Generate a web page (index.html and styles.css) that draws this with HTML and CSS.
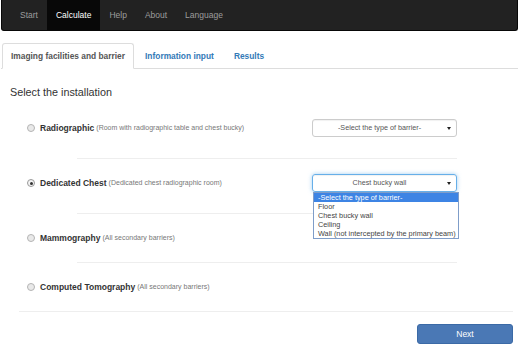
FILE: index.html
```html
<!DOCTYPE html>
<html lang="en">
<head>
    <meta charset="UTF-8">
    <title>Shielding calculation</title>
    <link rel="stylesheet" href="styles.css">
</head>
<body>
    <nav class="navbar">
        <ul class="nav-links">
            <li><a href="#">Start</a></li>
            <li class="active"><a href="#">Calculate</a></li>
            <li><a href="#">Help</a></li>
            <li><a href="#">About</a></li>
            <li><a href="#">Language</a></li>
        </ul>
    </nav>

    <ul class="tabs">
        <li class="active"><a href="#">Imaging facilities and barrier</a></li>
        <li><a href="#">Information input</a></li>
        <li><a href="#">Results</a></li>
    </ul>

    <div class="content">
        <h4 class="title">Select the installation</h4>

        <div class="installation with-select">
            <label class="option">
                <input type="radio" name="room">
                <b>Radiographic</b> <small>(Room with radiographic table and chest bucky)</small>
            </label>
            <div class="barrier">
                <div class="barrier-select">-Select the type of barrier-</div>
            </div>
        </div>
        <hr class="sep">

        <div class="installation with-select">
            <label class="option">
                <input type="radio" name="room" checked>
                <b>Dedicated Chest</b> <small>(Dedicated chest radiographic room)</small>
            </label>
            <div class="barrier">
                <div class="barrier-select focused">Chest bucky wall</div>
                <ul class="barrier-list">
                    <li class="selected">-Select the type of barrier-</li>
                    <li>Floor</li>
                    <li>Chest bucky wall</li>
                    <li>Ceiling</li>
                    <li>Wall (not intercepted by the primary beam)</li>
                </ul>
            </div>
        </div>
        <hr class="sep">

        <div class="installation">
            <label class="option">
                <input type="radio" name="room">
                <b>Mammography</b> <small>(All secondary barriers)</small>
            </label>
        </div>
        <hr class="sep">

        <div class="installation">
            <label class="option">
                <input type="radio" name="room">
                <b>Computed Tomography</b> <small>(All secondary barriers)</small>
            </label>
        </div>
        <hr class="sep sep-wide">

        <div class="actions">
            <button class="btn-next">Next</button>
        </div>
    </div>
</body>
</html>
```

FILE: styles.css
```css
body {
    margin: 0;
    font-family: "Liberation Sans", Arial, sans-serif;
    font-size: 8.5px;
    color: #333;
    background: #fff;
}
a {
    text-decoration: none;
}

/* top bar */
.navbar {
    margin: 0 2px 0 1px;
    height: 30px;
    background: #222;
    border: 1px solid #080808;
    border-top: none;
    border-radius: 0 0 3px 3px;
}
.nav-links {
    list-style: none;
    margin: 0;
    padding: 0 0 0 9px;
    display: flex;
}
.nav-links a {
    display: block;
    padding: 0 9px;
    line-height: 30px;
    color: #9d9d9d;
}
.nav-links .active a {
    background: #080808;
    color: #fff;
}

/* tabs */
.tabs {
    list-style: none;
    margin: 12px 2px 0 1px;
    padding: 0;
    display: flex;
    border-bottom: 1px solid #ddd;
}
.tabs li {
    margin: 0 2px -1px 0;
}
.tabs a {
    display: block;
    padding: 6px 8px;
    line-height: 12px;
    font-size: 8.4px;
    font-weight: bold;
    color: #337ab7;
    border: 1px solid transparent;
    border-radius: 3px 3px 0 0;
}
.tabs li:first-child a {
    margin-left: 1px;
}
.tabs .active a {
    color: #555;
    background: #fff;
    border-color: #ddd;
    border-bottom-color: #fff;
}

/* installation list */
.title {
    margin: 16px 0 5px 10px;
    font-size: 10.8px;
    line-height: 14px;
    font-weight: normal;
    color: #333;
}
.installation {
    display: flex;
    align-items: center;
    padding: 18px 63px 18px 27px;
    line-height: 12px;
}
.installation.with-select {
    padding-top: 15px;
    padding-bottom: 21px;
}
.option {
    flex: 1;
    display: flex;
    align-items: center;
    white-space: nowrap;
}
.option b {
    color: #333;
    margin-right: 2px;
}
.option small {
    font-size: 7px;
    color: #777;
}
.option input {
    appearance: none;
    width: 8px;
    height: 8px;
    margin: 0 5px 0 0;
    border: 1px solid #b4b4b4;
    border-radius: 50%;
    background: #e9e9e9;
    position: relative;
}
.option input:checked {
    background: #f4f4f4;
    border-color: #9a9a9a;
}
.option input:checked::after {
    content: "";
    position: absolute;
    left: 1.5px;
    top: 1.5px;
    width: 3px;
    height: 3px;
    border-radius: 50%;
    background: #333;
}

.barrier {
    position: relative;
    width: 145px;
}
.barrier-select {
    position: relative;
    height: 16px;
    line-height: 16px;
    padding-right: 10px;
    border: 1px solid #ccc;
    border-radius: 3px;
    box-shadow: inset 0 1px 1px rgba(0,0,0,0.06);
    text-align: center;
    font-size: 7.2px;
    color: #555;
}
.barrier-select::after {
    content: "";
    position: absolute;
    right: 5px;
    top: 7px;
    border-left: 2px solid transparent;
    border-right: 2px solid transparent;
    border-top: 3px solid #222;
}
.barrier-select.focused {
    border-color: #66afe9;
    box-shadow: inset 0 1px 1px rgba(0,0,0,0.06), 0 0 4px rgba(102,175,233,0.6);
}
.barrier-list {
    position: absolute;
    left: 1px;
    top: 18px;
    width: 144px;
    margin: 0;
    padding: 0;
    list-style: none;
    background: #fff;
    border: 1px solid #7f9dc9;
    font-size: 7.3px;
    line-height: 9px;
    color: #444;
    white-space: nowrap;
    z-index: 2;
}
.barrier-list li {
    padding-left: 4px;
}
.barrier-list .selected {
    background: #3d84e4;
    color: #fff;
}

.sep {
    margin: 0 0 0 77px;
    width: 380px;
    border: none;
    border-top: 1px solid #eee;
}
.sep-wide {
    margin-left: 19px;
    width: 494px;
}

.actions {
    display: flex;
    justify-content: flex-end;
    padding: 12px 7px 0 0;
}
.btn-next {
    width: 96px;
    height: 20px;
    font-family: inherit;
    font-size: 8.5px;
    color: #fff;
    background: #4a78b5;
    border: 1px solid #3b6aa6;
    border-radius: 3px;
    cursor: pointer;
}
```
